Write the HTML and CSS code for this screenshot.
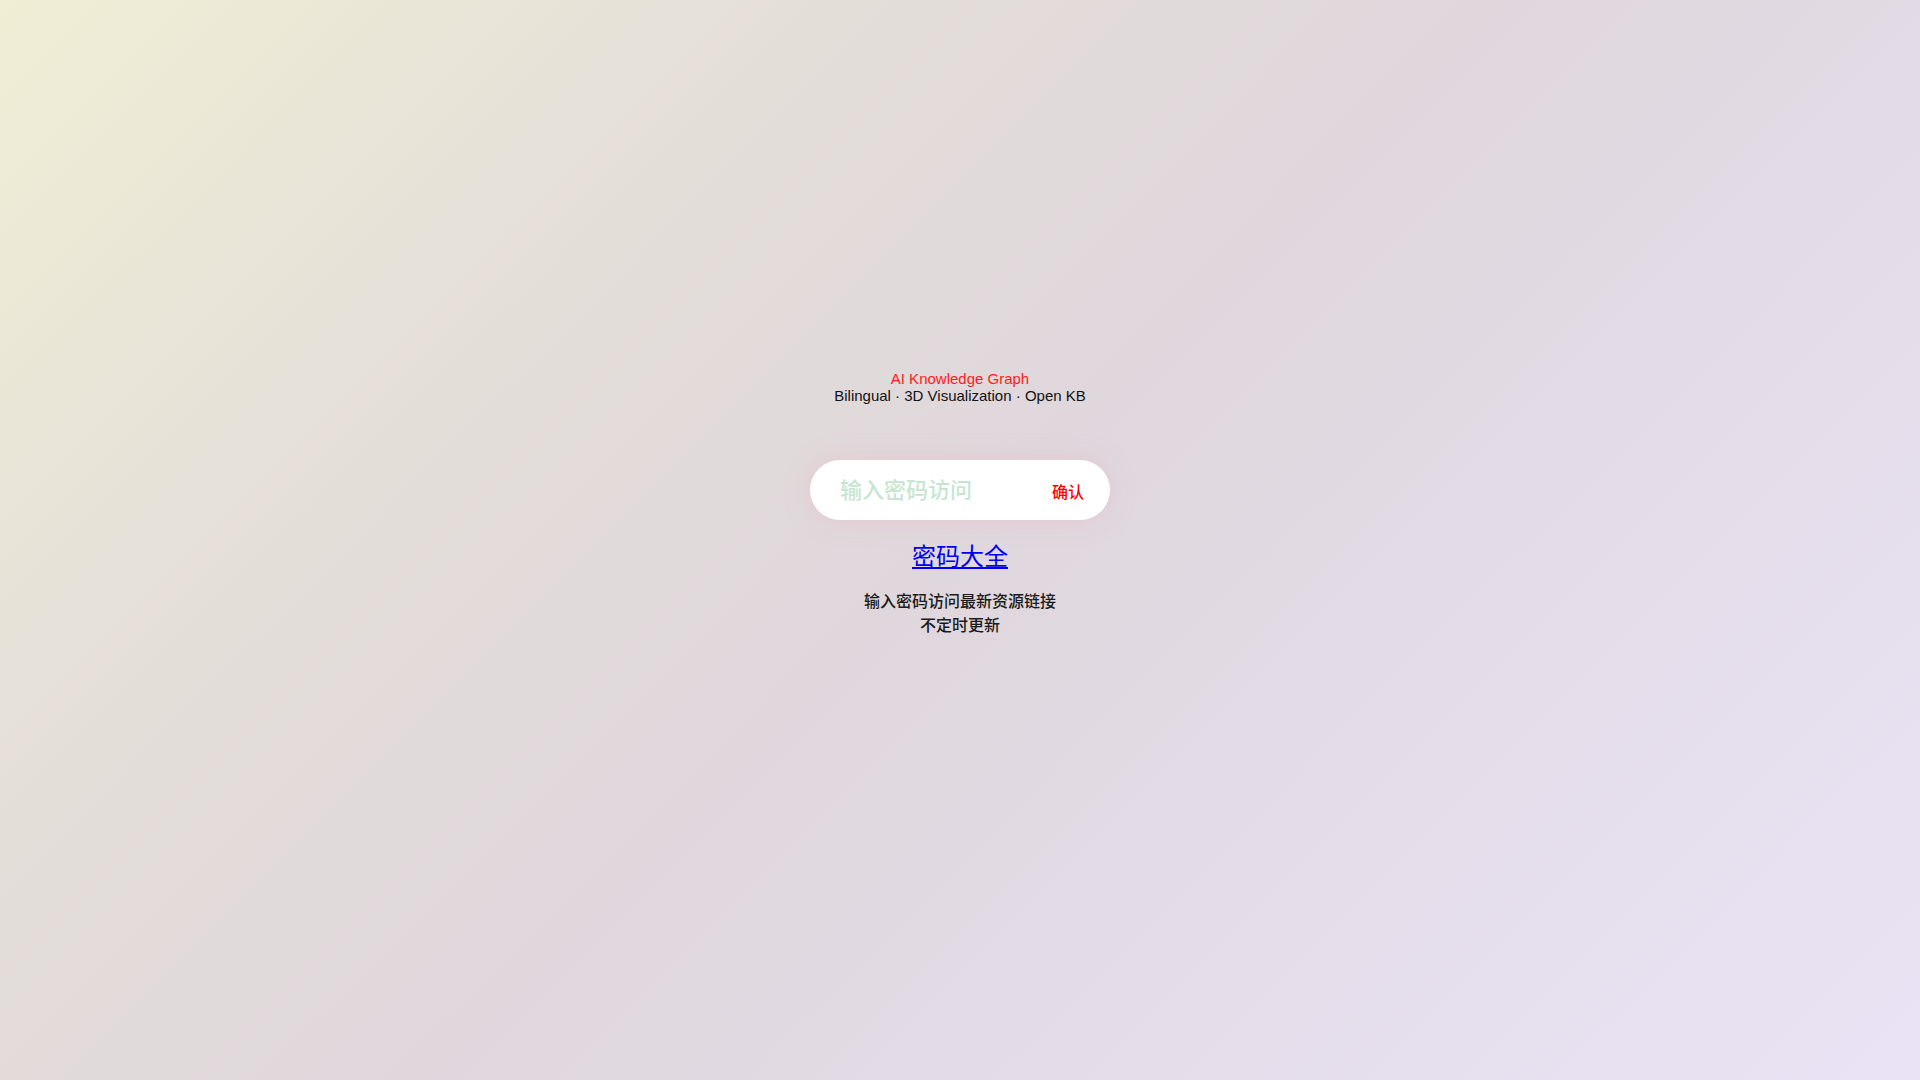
FILE: index.html
```html
<!DOCTYPE html>
<html lang="zh-CN">
<head>
<meta charset="utf-8">
<title>AI Knowledge Graph</title>
<link rel="stylesheet" href="styles.css">
</head>
<body>
<main class="page">
  <header class="brand">
    <div class="brand-title">AI Knowledge Graph</div>
    <div class="brand-sub">Bilingual · 3D Visualization · Open KB</div>
  </header>
  <form class="pass-box">
    <input class="pass-input" type="password" placeholder="输入密码访问">
    <button class="pass-btn" type="button">确认</button>
  </form>
  <a class="pass-link" href="#">密码大全</a>
  <p class="desc">输入密码访问最新资源链接<br>不定时更新</p>
</main>
</body>
</html>
```
FILE: styles.css
```css
html, body {
  margin: 0;
  padding: 0;
  height: 100%;
}
body {
  background: linear-gradient(135deg, #f0eed5 0%, #e3ddd9 30%, #dfd7dc 50%, #e5ddea 75%, #e9e3f5 100%);
  font-family: "Liberation Sans", Arial, "Noto Sans CJK SC", sans-serif;
  color: #111;
}
.page {
  display: flex;
  flex-direction: column;
  align-items: center;
  padding-top: 370px;
}
.brand {
  text-align: center;
  font-size: 15px;
  line-height: 17px;
}
.brand-title {
  color: #ff1a1a;
}
.brand-sub {
  color: #111;
}
.pass-box {
  margin: 56px 0 0;
  width: 300px;
  height: 60px;
  box-sizing: border-box;
  background: #fff;
  border-radius: 30px;
  box-shadow: 0 0 22px rgba(232, 185, 196, 0.55);
  display: flex;
  align-items: center;
  padding: 0 22px 0 30px;
}
.pass-input {
  flex: 1;
  min-width: 0;
  border: none;
  outline: none;
  background: transparent;
  font-family: "Noto Sans CJK SC", sans-serif;
  font-size: 22px;
  font-weight: 500;
  color: #333;
  padding: 0;
  margin-top: -4px;
}
.pass-input::placeholder {
  color: #c6e6d1;
}
.pass-btn {
  border: none;
  background: transparent;
  color: #ff0000;
  font-family: "Noto Sans CJK SC", sans-serif;
  font-size: 16px;
  font-weight: 500;
  padding: 0 4px;
  margin-top: 2px;
  cursor: pointer;
}
.pass-link {
  margin-top: 19px;
  font-family: "Noto Sans CJK SC", sans-serif;
  font-size: 24px;
  line-height: 32px;
  color: #0000ee;
  text-decoration: underline;
}
.desc {
  margin: 17px 0 0;
  text-align: center;
  font-family: "Noto Sans CJK SC", sans-serif;
  font-size: 16px;
  font-weight: 500;
  line-height: 24px;
  color: #1a1a1a;
}
```
